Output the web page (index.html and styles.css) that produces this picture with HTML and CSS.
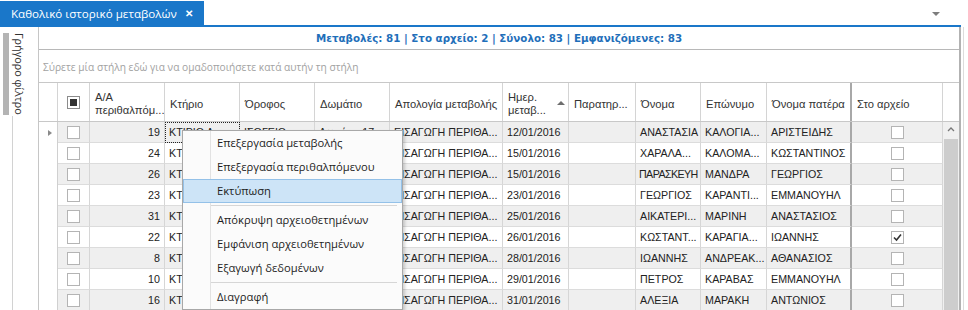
FILE: index.html
```html
<!DOCTYPE html>
<html lang="el">
<head>
  <meta charset="UTF-8" />
  <title>Καθολικό ιστορικό μεταβολών</title>
  <link rel="stylesheet" href="styles.css">
</head>
<body>

  <!-- Tabs -->
  <div class="tabs">
    <div class="tab">
      <span>Καθολικό ιστορικό μεταβολών</span>
      <span class="tab-close">✕</span>
    </div>
    <div class="tab-menu"></div>
  </div>

  <div class="main">

    <!-- Side filter panel -->
    <div class="side">
      <div class="side-tab">
        <div class="grip"></div>
        <div class="side-label">Γρήγορο φίλτρο</div>
      </div>
      <div class="side-rest"></div>
    </div>

    <!-- Grid -->
    <div class="grid">
      <div class="summary">Μεταβολές: 81 | Στο αρχείο: 2 | Σύνολο: 83 | Εμφανιζόμενες: 83</div>
      <div class="group-panel">Σύρετε μία στήλη εδώ για να ομαδοποιήσετε κατά αυτήν τη στήλη</div>

      <div class="head">
        <div class="h ind"></div>
        <div class="h mid"><span class="box box-part"></span></div>
        <div class="h">Α/Α<br>περιθαλπόμ...</div>
        <div class="h">Κτήριο</div>
        <div class="h">Όροφος</div>
        <div class="h">Δωμάτιο</div>
        <div class="h">Απολογία μεταβολής</div>
        <div class="h sort"><span>Ημερ.<br>μεταβ...</span><span class="sort-up"></span></div>
        <div class="h">Παρατηρ...</div>
        <div class="h">Όνομα</div>
        <div class="h">Επώνυμο</div>
        <div class="h fixed">Όνομα πατέρα</div>
        <div class="h">Στο αρχείο</div>
        <div class="h last"></div>
      </div>

      <div class="body">
        <div class="rows">
          <div class="row alt">
            <div class="c ind"><span class="arrow"></span></div>
            <div class="c mid"><span class="box"></span></div>
            <div class="c num">19</div>
            <div class="c focus">ΚΤΙΡΙΟ Α</div>
            <div class="c">ΙΣΟΓΕΙΟ</div>
            <div class="c">Δωμάτιο 17</div>
            <div class="c">ΕΙΣΑΓΩΓΗ ΠΕΡΙΘΑ...</div>
            <div class="c">12/01/2016</div>
            <div class="c"></div>
            <div class="c">ΑΝΑΣΤΑΣΙΑ</div>
            <div class="c">ΚΑΛΟΓΙΑ...</div>
            <div class="c fixed">ΑΡΙΣΤΕΙΔΗΣ</div>
            <div class="c mid"><span class="box"></span></div>
          </div>
          <div class="row">
            <div class="c ind"></div>
            <div class="c mid"><span class="box"></span></div>
            <div class="c num">24</div>
            <div class="c">ΚΤΙΡΙΟ Α</div>
            <div class="c">ΙΣΟΓΕΙΟ</div>
            <div class="c">Δωμάτιο 12</div>
            <div class="c">ΕΙΣΑΓΩΓΗ ΠΕΡΙΘΑ...</div>
            <div class="c">15/01/2016</div>
            <div class="c"></div>
            <div class="c">ΧΑΡΑΛΑ...</div>
            <div class="c">ΚΑΛΟΜΑ...</div>
            <div class="c fixed">ΚΩΣΤΑΝΤΙΝΟΣ</div>
            <div class="c mid"><span class="box"></span></div>
          </div>
          <div class="row alt">
            <div class="c ind"></div>
            <div class="c mid"><span class="box"></span></div>
            <div class="c num">26</div>
            <div class="c">ΚΤΙΡΙΟ Β</div>
            <div class="c">Α ΟΡΟΦΟΣ</div>
            <div class="c">Δωμάτιο 4</div>
            <div class="c">ΕΙΣΑΓΩΓΗ ΠΕΡΙΘΑ...</div>
            <div class="c">15/01/2016</div>
            <div class="c"></div>
            <div class="c tight">ΠΑΡΑΣΚΕΥΗ</div>
            <div class="c">ΜΑΝΔΡΑ</div>
            <div class="c fixed">ΓΕΩΡΓΙΟΣ</div>
            <div class="c mid"><span class="box"></span></div>
          </div>
          <div class="row">
            <div class="c ind"></div>
            <div class="c mid"><span class="box"></span></div>
            <div class="c num">23</div>
            <div class="c">ΚΤΙΡΙΟ Α</div>
            <div class="c">ΙΣΟΓΕΙΟ</div>
            <div class="c">Δωμάτιο 9</div>
            <div class="c">ΕΙΣΑΓΩΓΗ ΠΕΡΙΘΑ...</div>
            <div class="c">23/01/2016</div>
            <div class="c"></div>
            <div class="c">ΓΕΩΡΓΙΟΣ</div>
            <div class="c">ΚΑΡΑΝΤΙ...</div>
            <div class="c fixed">ΕΜΜΑΝΟΥΗΛ</div>
            <div class="c mid"><span class="box"></span></div>
          </div>
          <div class="row alt">
            <div class="c ind"></div>
            <div class="c mid"><span class="box"></span></div>
            <div class="c num">31</div>
            <div class="c">ΚΤΙΡΙΟ Β</div>
            <div class="c">Α ΟΡΟΦΟΣ</div>
            <div class="c">Δωμάτιο 2</div>
            <div class="c">ΕΙΣΑΓΩΓΗ ΠΕΡΙΘΑ...</div>
            <div class="c">25/01/2016</div>
            <div class="c"></div>
            <div class="c">ΑΙΚΑΤΕΡΙ...</div>
            <div class="c">ΜΑΡΙΝΗ</div>
            <div class="c fixed">ΑΝΑΣΤΑΣΙΟΣ</div>
            <div class="c mid"><span class="box"></span></div>
          </div>
          <div class="row">
            <div class="c ind"></div>
            <div class="c mid"><span class="box"></span></div>
            <div class="c num">22</div>
            <div class="c">ΚΤΙΡΙΟ Α</div>
            <div class="c">ΙΣΟΓΕΙΟ</div>
            <div class="c">Δωμάτιο 6</div>
            <div class="c">ΕΙΣΑΓΩΓΗ ΠΕΡΙΘΑ...</div>
            <div class="c">26/01/2016</div>
            <div class="c"></div>
            <div class="c">ΚΩΣΤΑΝΤ...</div>
            <div class="c">ΚΑΡΑΓΙΑ...</div>
            <div class="c fixed">ΙΩΑΝΝΗΣ</div>
            <div class="c mid">
              <span class="box">
                <svg width="11" height="11" viewBox="0 0 11 11"><polyline points="2,5.5 4.5,8 9,2.5" fill="none" stroke="#333" stroke-width="1.6"/></svg>
              </span>
            </div>
          </div>
          <div class="row alt">
            <div class="c ind"></div>
            <div class="c mid"><span class="box"></span></div>
            <div class="c num">8</div>
            <div class="c">ΚΤΙΡΙΟ Α</div>
            <div class="c">ΙΣΟΓΕΙΟ</div>
            <div class="c">Δωμάτιο 3</div>
            <div class="c">ΕΙΣΑΓΩΓΗ ΠΕΡΙΘΑ...</div>
            <div class="c">28/01/2016</div>
            <div class="c"></div>
            <div class="c">ΙΩΑΝΝΗΣ</div>
            <div class="c">ΑΝΔΡΕΑΚ...</div>
            <div class="c fixed">ΑΘΑΝΑΣΙΟΣ</div>
            <div class="c mid"><span class="box"></span></div>
          </div>
          <div class="row">
            <div class="c ind"></div>
            <div class="c mid"><span class="box"></span></div>
            <div class="c num">10</div>
            <div class="c">ΚΤΙΡΙΟ Β</div>
            <div class="c">Α ΟΡΟΦΟΣ</div>
            <div class="c">Δωμάτιο 8</div>
            <div class="c">ΕΙΣΑΓΩΓΗ ΠΕΡΙΘΑ...</div>
            <div class="c">29/01/2016</div>
            <div class="c"></div>
            <div class="c">ΠΕΤΡΟΣ</div>
            <div class="c">ΚΑΡΑΒΑΣ</div>
            <div class="c fixed">ΕΜΜΑΝΟΥΗΛ</div>
            <div class="c mid"><span class="box"></span></div>
          </div>
          <div class="row alt">
            <div class="c ind"></div>
            <div class="c mid"><span class="box"></span></div>
            <div class="c num">16</div>
            <div class="c">ΚΤΙΡΙΟ Α</div>
            <div class="c">ΙΣΟΓΕΙΟ</div>
            <div class="c">Δωμάτιο 11</div>
            <div class="c">ΕΙΣΑΓΩΓΗ ΠΕΡΙΘΑ...</div>
            <div class="c">31/01/2016</div>
            <div class="c"></div>
            <div class="c">ΑΛΕΞΙΑ</div>
            <div class="c">ΜΑΡΑΚΗ</div>
            <div class="c fixed">ΑΝΤΩΝΙΟΣ</div>
            <div class="c mid"><span class="box"></span></div>
          </div>
        </div>

        <!-- Vertical scrollbar -->
        <div class="vscroll">
          <div class="vscroll-up">
            <svg width="8" height="5" viewBox="0 0 8 5"><polyline points="1,4 4,1 7,4" fill="none" stroke="#777" stroke-width="1.3"/></svg>
          </div>
          <div class="vscroll-thumb"></div>
        </div>
      </div>
    </div>

    <div class="edge"></div>
  </div>

  <!-- Context menu -->
  <div class="menu">
    <div class="menu-item">Επεξεργασία μεταβολής</div>
    <div class="menu-item">Επεξεργασία περιθαλπόμενου</div>
    <div class="menu-item hover">Εκτύπωση</div>
    <div class="menu-sep"></div>
    <div class="menu-item">Απόκρυψη αρχειοθετημένων</div>
    <div class="menu-item">Εμφάνιση αρχειοθετημένων</div>
    <div class="menu-item">Εξαγωγή δεδομένων</div>
    <div class="menu-sep"></div>
    <div class="menu-item">Διαγραφή</div>
  </div>

</body>
</html>
```

FILE: styles.css
```css
* { box-sizing: border-box; margin: 0; padding: 0; }
body { width: 968px; height: 310px; overflow: hidden; position: relative; background: #fff; font-family: "Open Sans", sans-serif; color: #222; }

/* tabs */
.tabs { width: 961px; height: 27px; border-bottom: 2px solid #1a77c9; display: flex; justify-content: space-between; }
.tab { width: 204px; height: 24px; margin-top: 1px; background: #1a77c9; color: #fff; font-size: 11.6px; display: flex; align-items: center; padding: 0 11px; }
.tab-close { margin-left: auto; font-size: 10px; font-weight: bold; }
.tab-menu { margin: 12px 21px 0 0; width: 0; height: 0; border-left: 4px solid transparent; border-right: 4px solid transparent; border-top: 4px solid #7d7d7d; }

.main { display: flex; height: 283px; }

/* side panel */
.side { width: 38px; display: flex; flex-direction: column; }
.side-tab { display: flex; height: 89px; padding-top: 6px; }
.grip { width: 6px; height: 82px; margin-left: 3px; background: #b4b4b4; }
.side-label { writing-mode: vertical-rl; margin-left: 3px; line-height: 15px; font-size: 10.8px; color: #333; }
.side-rest { flex: 1; margin-left: 12px; border-left: 1px solid #d2d2d2; }

/* grid */
.grid { width: 923px; border-left: 1px solid #c6c6c6; border-right: 2px solid #b2b2b2; display: flex; flex-direction: column; }
.summary { height: 23px; border-bottom: 1px solid #b8b8b8; text-align: center; line-height: 22px; font-family: "DejaVu Sans", sans-serif; font-size: 10.3px; font-weight: bold; color: #1f6fba; }
.group-panel { height: 33px; border-bottom: 1px solid #c8c8c8; padding: 2px 0 0 4px; line-height: 30px; font-size: 10.2px; color: #a2a2a2; }

.head, .row { display: grid; grid-template-columns: 19px 32px 75px 75px 75px 75px 113px 66px 67px 65px 66px 85px 91px; }
.head { grid-template-columns: 19px 32px 75px 75px 75px 75px 113px 66px 67px 65px 66px 85px 91px 16px; height: 39px; border-bottom: 1px solid #c8c8c8; }
.h { display: flex; align-items: center; padding: 4px 2px 0 5px; border-right: 1px solid #d4d4d4; font-family: "Liberation Sans", Arial, sans-serif; font-size: 11.2px; line-height: 13px; color: #333; white-space: nowrap; overflow: hidden; }
.h.last { border-right: none; }
.sort { justify-content: space-between; padding-right: 3px; }
.sort-up { width: 0; height: 0; margin-bottom: 2px; border-left: 4px solid transparent; border-right: 4px solid transparent; border-bottom: 4px solid #6e6e6e; }

.body { display: flex; flex: 1; overflow: hidden; }
.rows { width: 904px; }
.row { height: 21px; }
.row.alt .c { background: #efefef; }
.c { height: 21px; padding: 0 1px 0 4px; border-right: 1px solid #d6d6d6; border-bottom: 1px solid #dcdcdc; font-family: "Liberation Sans", Arial, sans-serif; font-size: 10.7px; line-height: 20px; color: #222; white-space: nowrap; overflow: hidden; text-overflow: ellipsis; }
.c.tight { letter-spacing: -0.6px; padding-left: 3px; }
.row .c.ind { background: #fff; border-bottom: none; border-right-color: #d0d0d0; display: flex; align-items: center; justify-content: center; }
.num { text-align: right; padding-right: 4px; }
.fixed { border-right: 2px solid #a8a8a8 !important; }
.mid { display: flex; align-items: center; justify-content: center; padding: 0; }
.focus { outline: 1px dotted #222; outline-offset: -1px; }

.arrow { width: 0; height: 0; margin-left: 1px; border-top: 3.5px solid transparent; border-bottom: 3.5px solid transparent; border-left: 4px solid #8a8a8a; }
.box { width: 13px; height: 13px; border: 1px solid #b4b4b4; background: #fff; display: flex; align-items: center; justify-content: center; }
.box-part { border-color: #8c8c8c; }
.box-part::after { content: ""; width: 7px; height: 7px; background: #333; }

.vscroll { width: 16px; display: flex; flex-direction: column; background: #f0f0f0; }
.vscroll-up { height: 17px; display: flex; justify-content: center; padding-top: 5px; }
.vscroll-thumb { flex: 1; margin: 0 1px; background: #cdcdcd; }

.edge { width: 3px; margin-left: 2px; border-left: 1px solid #dcdcdc; }

/* context menu */
.menu { position: absolute; left: 182px; top: 130px; width: 221px; border: 1px solid #a8a8a8; box-shadow: 2px 2px 3px rgba(0,0,0,0.18);
  background: linear-gradient(to right, #fbfbfb 27px, #e2e2e2 27px, #e2e2e2 28px, #fbfbfb 28px); font-size: 11.2px; color: #1e1e1e; }
.menu-item { height: 24px; line-height: 23px; padding-left: 34px; white-space: nowrap; }
.menu-item.hover { background: #cde4f7; border: 1px solid #94c1e8; padding-left: 33px; line-height: 21px; }
.menu-sep { height: 5px; margin: 0 5px 0 28px; padding-top: 2px; }
.menu-sep::after { content: ""; display: block; border-top: 1px solid #d6d6d6; }
```
